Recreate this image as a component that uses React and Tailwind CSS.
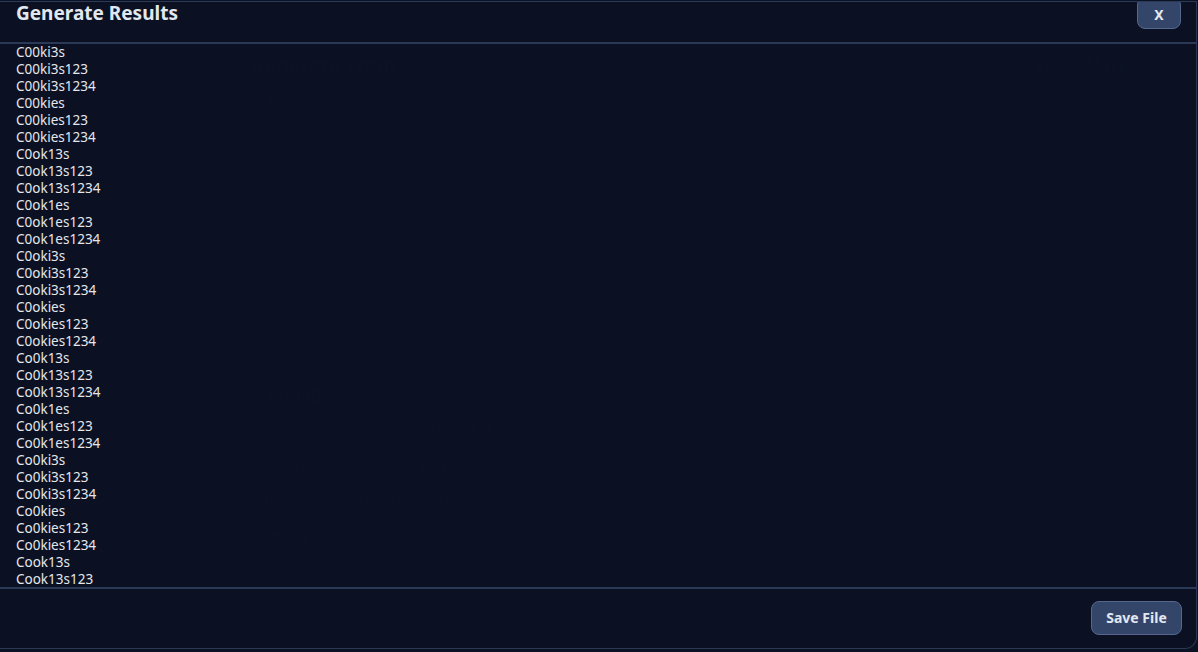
import React from "react";

const results = [
  "C00ki3s",
  "C00ki3s123",
  "C00ki3s1234",
  "C00kies",
  "C00kies123",
  "C00kies1234",
  "C0ok13s",
  "C0ok13s123",
  "C0ok13s1234",
  "C0ok1es",
  "C0ok1es123",
  "C0ok1es1234",
  "C0oki3s",
  "C0oki3s123",
  "C0oki3s1234",
  "C0okies",
  "C0okies123",
  "C0okies1234",
  "Co0k13s",
  "Co0k13s123",
  "Co0k13s1234",
  "Co0k1es",
  "Co0k1es123",
  "Co0k1es1234",
  "Co0ki3s",
  "Co0ki3s123",
  "Co0ki3s1234",
  "Co0kies",
  "Co0kies123",
  "Co0kies1234",
  "Cook13s",
  "Cook13s123",
];

function BackgroundPage() {
  return (
    <div className="h-[652px] w-full bg-[#0b1223] text-[#141d31] px-[250px] pt-[50px] flex flex-col">
      <div className="flex justify-between">
        <div>
          <div className="text-[20px] font-semibold">Generate From</div>
          <div className="text-[15px] ml-[18px] mt-[8px]">Cookies</div>
        </div>
        <div className="text-[16px] font-semibold -mr-[180px] mt-[4px]">Select Mask</div>
      </div>
      <div className="mt-[270px] ml-[15px] flex flex-col gap-[14px] text-[14px]">
        <div className="text-[16px] font-semibold">Settings</div>
        <div>Include original words in result list</div>
        <div>Add common numbers to the end of each word</div>
        <div>Replace letters with similar looking numbers</div>
        <div className="text-[16px] font-semibold">Prefix</div>
      </div>
    </div>
  );
}

export default function App() {
  return (
    <div className="relative h-[652px] w-full overflow-hidden bg-[#0b1223]" style={{ fontFamily: '"Noto Sans", "Open Sans", sans-serif' }}>
      <BackgroundPage />
      <div className="absolute inset-0 flex flex-col">
        <div className="mt-px h-[648px] w-[1197px] border border-[#2a3956] border-l-0 rounded-br-[12px] bg-[#0b1223]/[0.96] flex flex-col overflow-hidden">
          <div className="h-[42px] shrink-0 flex items-start justify-between pl-4 pr-[15px] border-b-2 border-[#2a3956]">
            <h2 className="text-[19px] font-bold text-[#e2e8f0] leading-[24px] -mt-[1px]">Generate Results</h2>
            <button className="relative z-10 -mt-[5px] w-[44px] h-[32px] rounded-lg bg-[#34456a] border border-[#55678f] text-[#e2e8f0] text-[14px] font-bold pt-[3px]">
              X
            </button>
          </div>
          <div className="flex-1 overflow-hidden pl-4">
            {results.map((r) => (
              <div key={r} className="text-[13.5px] leading-[17px] text-[#e5e7eb]">
                {r}
              </div>
            ))}
          </div>
          <div className="h-[61px] shrink-0 border-t-2 border-[#2a3956] flex items-center justify-end pr-[14px]">
            <button className="h-[34px] w-[91px] -mt-[2px] rounded-lg bg-[#34456a] border border-[#55678f] text-[#e2e8f0] text-[14px] font-bold">
              Save File
            </button>
          </div>
        </div>
      </div>
    </div>
  );
}
